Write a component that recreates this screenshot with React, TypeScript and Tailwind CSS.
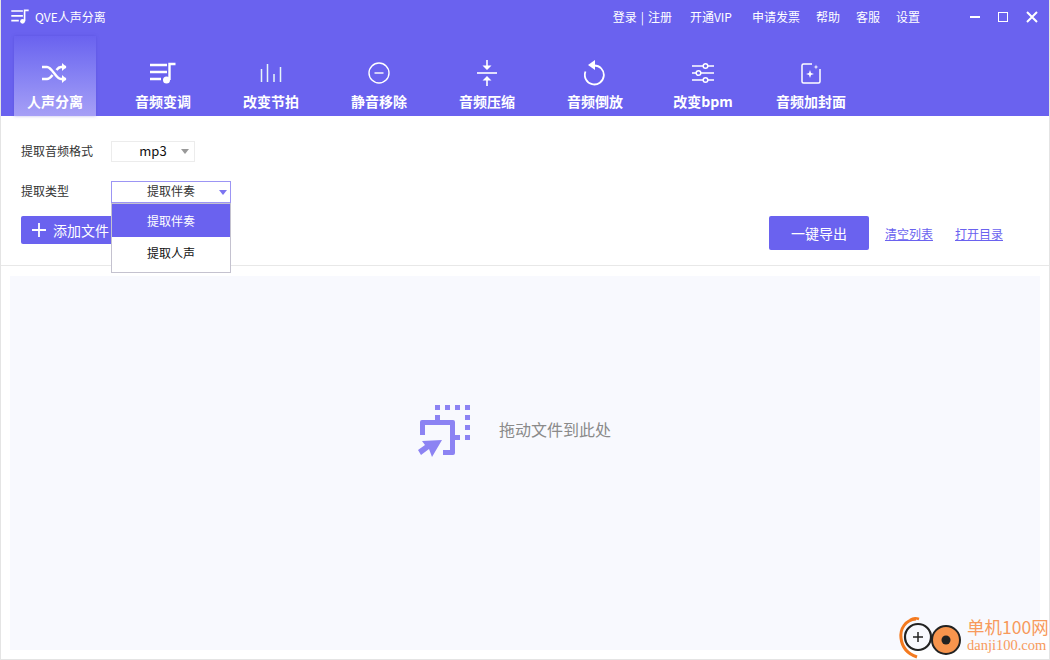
const cjk = "font-['Microsoft_YaHei','Noto_Sans_CJK_SC','Noto_Sans',sans-serif]";

function PlaylistIcon({ className }: { className: string }) {
  return (
    <svg viewBox="0 0 27 22" className={className} fill="none" stroke="currentColor" strokeWidth="2.4">
      <path d="M0 3h17M0 10h17M0 17h11" />
      <path d="M19.5 18V2h6" />
      <circle cx="16.5" cy="18" r="3.5" fill="currentColor" stroke="none" />
    </svg>
  );
}

const tabs: { label: string; icon: React.ReactNode }[] = [
  {
    label: "人声分离",
    icon: (
      <svg viewBox="0 0 26 22" className="w-[26px] h-[22px]" fill="none" stroke="currentColor" strokeWidth="2.4">
        <path d="M0 5h5c5 0 9 12 14 12h5M0 17h5c2 0 4-2 5.500-4M14.500 8c1.500-2 3-3 4.500-3h5" />
        <path d="M20 1l4.500 4-4.500 4zM20 13l4.500 4-4.500 4z" fill="currentColor" stroke="none" />
      </svg>
    ),
  },
  { label: "音频变调", icon: <PlaylistIcon className="w-[27px] h-[22px]" /> },
  {
    label: "改变节拍",
    icon: (
      <svg viewBox="0 0 22 18" className="w-[22px] h-[18px]" fill="none" stroke="#e6f6f8" strokeWidth="1.5">
        <path d="M1.500 5v13M7.500 0v18M14 10v8M20.500 3v15" />
      </svg>
    ),
  },
  {
    label: "静音移除",
    icon: (
      <svg viewBox="0 0 22 22" className="w-[22px] h-[22px]" fill="none" stroke="currentColor" strokeWidth="1.4">
        <circle cx="11" cy="11" r="10" />
        <path d="M6.500 11h9" />
      </svg>
    ),
  },
  {
    label: "音频压缩",
    icon: (
      <svg viewBox="0 0 20 26" className="w-[20px] h-[26px]" fill="none" stroke="currentColor" strokeWidth="1.6">
        <path d="M0 13h20" />
        <path d="M10 0v7M10 19v7" />
        <path d="M5.500 5.500h9L10 10zM5.500 20.500h9L10 16z" fill="currentColor" stroke="none" />
      </svg>
    ),
  },
  {
    label: "音频倒放",
    icon: (
      <svg viewBox="0 0 22 26" className="w-[22px] h-[26px]" fill="none" stroke="currentColor" strokeWidth="1.8">
        <path d="M10 5.500a9.500 9.500 0 1 1-8.500 6" />
        <path d="M11 0v10L4 5z" fill="currentColor" stroke="none" />
      </svg>
    ),
  },
  {
    label: "改变bpm",
    icon: (
      <svg viewBox="0 0 22 22" className="w-[22px] h-[22px]" fill="none" stroke="currentColor" strokeWidth="1.5">
        <path d="M0 4h11M16 4h6M0 11h4M9 11h13M0 18h11M16 18h6" />
        <circle cx="13.500" cy="4" r="2.300" />
        <circle cx="6.500" cy="11" r="2.300" />
        <circle cx="13.500" cy="18" r="2.300" />
      </svg>
    ),
  },
  {
    label: "音频加封面",
    icon: (
      <svg viewBox="0 0 20 21" className="w-[20px] h-[21px]" fill="none" stroke="currentColor" strokeWidth="1.5">
        <path d="M11 1H2.500A1.500 1.500 0 0 0 1 2.500v16A1.500 1.500 0 0 0 2.500 20h15a1.500 1.500 0 0 0 1.500-1.500V6" />
        <path d="M9 7l1 3 3 1-3 1-1 3-1-3-3-1 3-1zM15 1.500l.6 1.900 1.900.6-1.900.6-.6 1.900-.6-1.900-1.900-.6 1.900-.6z" fill="currentColor" stroke="none" />
      </svg>
    ),
  },
];

function Caret({ color }: { color: string }) {
  return (
    <svg viewBox="0 0 8 5" className="w-[8px] h-[5px]" fill={color}>
      <path d="M0 0h8L4 5z" />
    </svg>
  );
}

function DropIcon() {
  return (
    <svg viewBox="0 0 52 52" className="w-[52px] h-[52px] shrink-0" fill="#8c83f3">
      <path d="M17 0h5v5h-5zM27 0h5v5h-5zM37 0h5v5h-5zM47 0h5v5h-5zM47 10h5v5h-5zM47 20h5v5h-5zM47 30h5v5h-5zM17 10h5v5h-5zM37 30h5v5h-5z" />
      <path d="M2 30V17a2 2 0 0 1 2-2h31a2 2 0 0 1 2 2v31a2 2 0 0 1-2 2H25v-5h7V20H7v10z" />
      <path d="M4 36l20-1-10 17-3-8-8 6-3-5 7-5z" />
    </svg>
  );
}

function Logo() {
  return (
    <svg viewBox="0 0 64 48" className="w-[64px] h-[48px] mr-[5px]" fill="none">
      <path d="M18 8C7 9 2 18 3 27c1 9 7 16 16 19" stroke="#f47a1f" strokeWidth="3" />
      <path d="M12 9c3-2 6-2 9-1" stroke="#f47a1f" strokeWidth="2.500" />
      <circle cx="20" cy="26" r="13" stroke="#222" strokeWidth="2.200" fill="#f8f9fe" />
      <path d="M15 26h10M20 21v10" stroke="#222" strokeWidth="1.500" />
      <circle cx="48" cy="29" r="14" stroke="#222" strokeWidth="2" fill="#f7944d" />
      <circle cx="48" cy="29" r="4.500" fill="#222" />
    </svg>
  );
}

export default function App() {
  return (
    <div className={`${cjk} relative w-[1050px] h-[660px] overflow-hidden bg-white border-x border-b border-[#e4e4e4] flex flex-col`}>
      <header className="-mx-px h-[116px] shrink-0 bg-[#6a62ef] text-white flex flex-col">
        <div className="h-[36px] flex items-center pl-[11px] pr-[12px]">
          <PlaylistIcon className="w-[19px] h-[15px] -mt-[3px]" />
          <span className="ml-[5px] text-[12px] -mt-[3px] leading-none">QVE人声分离</span>
          <div className="ml-auto flex items-center text-[12px] -mt-[3px]">
            <span className="flex gap-[4px]">
              <span>登录</span>
              <span>|</span>
              <span>注册</span>
            </span>
            <span className="ml-[18px]">开通VIP</span>
            <span className="ml-[20px]">申请发票</span>
            <span className="ml-[16px]">帮助</span>
            <span className="ml-[16px]">客服</span>
            <span className="ml-[16px]">设置</span>
            <div className="ml-[50px] flex items-center gap-[18px]">
              <span className="w-[10px] h-[2px] bg-white" />
              <span className="w-[10px] h-[10px] border-[1.5px] border-white" />
              <svg viewBox="0 0 12 12" className="w-[12px] h-[12px]" stroke="currentColor" strokeWidth="2">
                <path d="M1 1l10 10M11 1L1 11" />
              </svg>
            </div>
          </div>
        </div>
        <nav className="flex-1 flex pl-px">
          {tabs.map((t, i) => (
            <div key={t.label} className="w-[108px] flex justify-center">
              <div
                className={`w-[82px] h-full flex flex-col items-center ${
                  i === 0 ? "bg-gradient-to-b from-[#6a62ef] to-[#a69ff6] shadow-[0_0_3px_rgba(70,60,200,0.35)]" : ""
                }`}
              >
                <div className="h-[54px] pt-[20px] flex items-center justify-center text-white">{t.icon}</div>
                <span className="mt-[1px] text-[14px] font-bold leading-[20px] whitespace-nowrap">{t.label}</span>
              </div>
            </div>
          ))}
        </nav>
      </header>

      <section className="h-[150px] shrink-0 border-b border-[#e8e8e8] pl-[20px] pt-[25px] relative">
        <div className="flex items-center h-[21px] text-[12px] text-[#333]">
          <span className="w-[90px] pb-[2px]">提取音频格式</span>
          <div className="w-[84px] h-[21px] border border-[#ececec] flex items-center relative">
            <span className="w-[83px] text-center text-[13px] text-[#111] pb-[2px]">mp3</span>
            <span className="absolute right-[5px] top-[7px]">
              <Caret color="#999" />
            </span>
          </div>
        </div>
        <div className="mt-[19px] flex items-center h-[22px] text-[12px] text-[#333]">
          <span className="w-[90px] pb-[2px]">提取类型</span>
          <div className="w-[120px] h-[22px] border border-[#9c95f4] flex items-center relative">
            <span className="w-[118px] text-center pb-[2px]">提取伴奏</span>
            <span className="absolute right-[3px] top-[8px]">
              <Caret color="#7c74f1" />
            </span>
            <div className="absolute left-[-1px] top-[21px] w-[120px] h-[70px] bg-white border border-[#c4c2cf] z-10 flex flex-col">
              <span className="h-[33px] bg-[#6a62ef] text-white flex items-center justify-center">提取伴奏</span>
              <span className="flex-1 flex items-center justify-center text-[#111] pb-[3px]">提取人声</span>
            </div>
          </div>
        </div>
        <div className="mt-[13px] flex items-start">
          <button className="w-[94px] h-[28px] bg-[#6a62ef] rounded-[2px] text-white text-[14px] flex items-center pl-[11px] whitespace-nowrap">
            <svg viewBox="0 0 14 14" className="w-[14px] h-[14px] mr-[7px] shrink-0" stroke="currentColor" strokeWidth="1.8">
              <path d="M7 0v14M0 7h14" />
            </svg>
            添加文件
          </button>
          <div className="ml-auto flex items-center pr-[46px] text-[12px]">
            <button className="w-[100px] h-[34px] bg-[#6a62ef] rounded-[2px] text-white text-[14px] pt-[1px]">一键导出</button>
            <a className="ml-[16px] text-[#6a62ef] underline pt-[2px]">清空列表</a>
            <a className="ml-[22px] text-[#6a62ef] underline pt-[2px]">打开目录</a>
          </div>
        </div>
      </section>

      <main className="flex-1 px-[9px] pt-[10px] pb-[9px]">
        <div className="h-full bg-[#f8f9fe] flex items-center justify-center gap-[29px] pr-[21px] pb-[64px]">
          <DropIcon />
          <span className="text-[16px] text-[#8a8a8a] pb-[4px]">拖动文件到此处</span>
        </div>
      </main>

      <div className="absolute right-[2px] bottom-0 flex items-center">
        <Logo />
        <div className="w-[80px] flex flex-col items-start leading-none">
          <span className="text-[17.500px] leading-[21px] text-[#f79a5c] whitespace-nowrap">单机100网</span>
          <span className="text-[14.500px] leading-[17px] text-[#f79a5c] font-['Liberation_Serif',serif] whitespace-nowrap">danji100.com</span>
        </div>
      </div>
    </div>
  );
}
